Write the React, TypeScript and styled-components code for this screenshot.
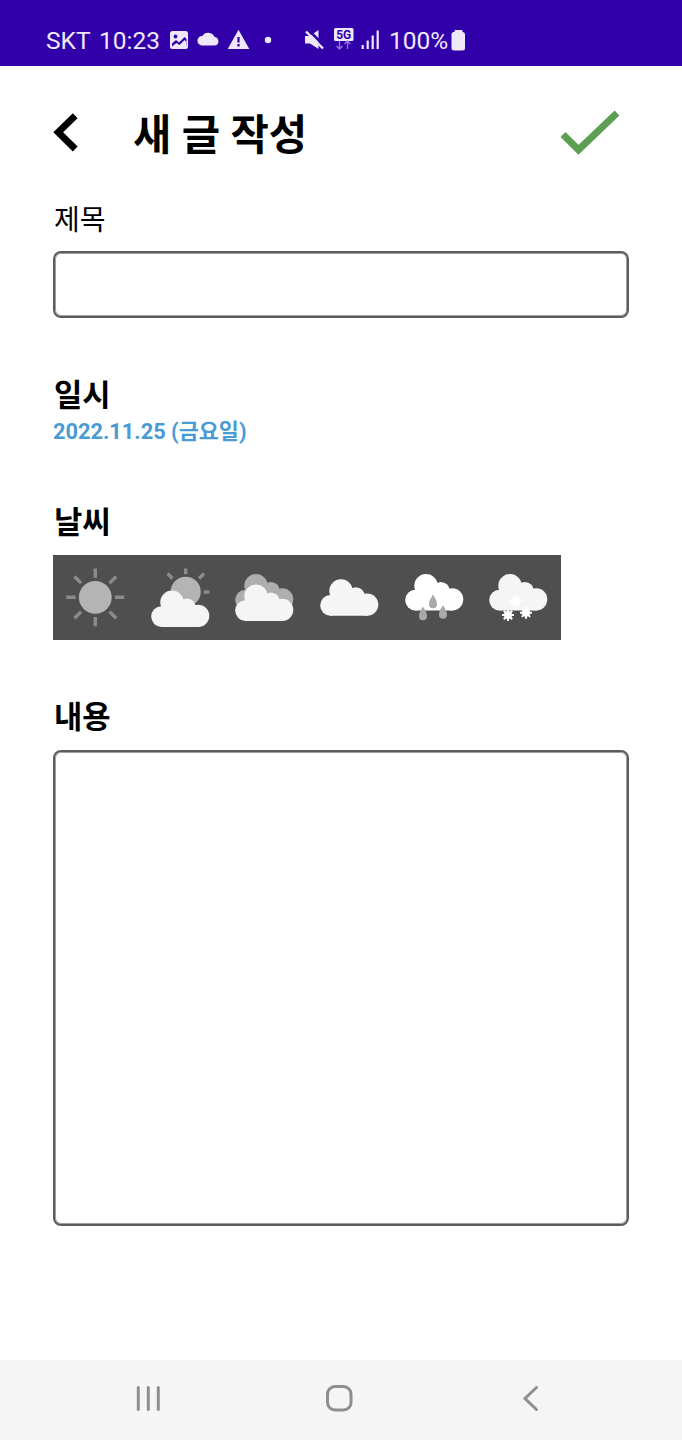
import React from 'react';
import styled, { createGlobalStyle } from 'styled-components';

const Global = createGlobalStyle`
  * { box-sizing: border-box; }
  body { margin: 0; background: #fff; }
  button { border: 0; padding: 0; background: none; display: block; }
  svg { display: block; }
`;

const Screen = styled.div`
  width: 682px;
  height: 1440px;
  display: flex;
  flex-direction: column;
  background: #fff;
  color: #000;
  font-family: Roboto, 'Noto Sans CJK KR', sans-serif;
`;

const StatusBar = styled.header`
  height: 66px;
  flex: none;
  display: flex;
  align-items: center;
  padding: 14px 0 0 46px;
  background: #3100a9;
  color: #efe8fb;
  font-size: 24.5px;
  line-height: 30px;
`;

const StatusText = styled.span<{ $width: number }>`
  width: ${p => p.$width}px;
  padding-top: 1px;
  white-space: nowrap;
`;

const Main = styled.main`
  flex: 1;
  padding: 0 53px;
`;

const TitleBar = styled.div`
  height: 134px;
  display: flex;
  align-items: center;
`;

const BackButton = styled.button`
  width: 80px;
`;

const Title = styled.h1`
  flex: 1;
  margin: 0;
  padding-top: 5px;
  font-size: 41.7px;
  font-weight: 700;
  line-height: 60px;
`;

const DoneButton = styled.button`
  margin-right: 9px;
`;

const Field = styled.section<{ $height: number }>`
  height: ${p => p.$height}px;
  display: flex;
  flex-direction: column;
  align-items: flex-start;
`;

const Label = styled.label<{ $bold?: boolean; $height: number }>`
  height: ${p => p.$height}px;
  padding: ${p => (p.$bold ? 2 : 1)}px 0 0 1px;
  line-height: 40px;
  font-size: ${p => (p.$bold ? 30.8 : 28)}px;
  font-weight: ${p => (p.$bold ? 700 : 400)};
`;

const TitleInput = styled.input`
  width: 100%;
  height: 67px;
  border: 2px solid #5c5c5c;
  box-shadow: inset 0 0 0 1px #a0a0a0;
  border-radius: 8px;
  padding: 0 16px;
  outline: none;
  font: inherit;
`;

const BodyInput = styled.textarea`
  display: block;
  width: 100%;
  height: 476px;
  border: 2px solid #5c5c5c;
  box-shadow: inset 0 0 0 1px #a0a0a0;
  border-radius: 8px;
  padding: 16px;
  outline: none;
  resize: none;
  font: inherit;
`;

const DateText = styled.time`
  padding-top: 1px;
  color: #4a9ad4;
  font-size: 21.8px;
  font-weight: 700;
  line-height: 30px;
`;

const WeatherRow = styled.div`
  display: grid;
  grid-template-columns: repeat(6, 1fr);
  width: 508px;
  height: 85px;
  background: #4f4f4f;
`;

const NavBar = styled.nav`
  height: 80px;
  flex: none;
  display: flex;
  justify-content: space-between;
  align-items: center;
  padding: 0 138px 4px 133px;
  background: #f5f5f5;
`;

const WeatherIcon = ({ children }: { children: React.ReactNode }) => (
  <svg width="84.67" height="85" viewBox="0 0 84.67 85">{children}</svg>
);

const Cloud = ({ dy, fill }: { dy: number; fill: string }) => (
  <g transform={`translate(0 ${dy})`} fill={fill}>
    <circle cx="34" cy="36" r="11.7" />
    <circle cx="48.8" cy="41.2" r="9" />
    <circle cx="23.5" cy="50.4" r="10.3" />
    <circle cx="60.2" cy="49.6" r="11.1" />
    <path d="M23 41h38v19.7H23z" />
  </g>
);

const Drop = ({ x, y }: { x: number; y: number }) => (
  <path
    transform={`translate(${x} ${y})`}
    d="M0 0C1.500 3 4 5.500 4 9.800a4 4 0 0 1-8 0C-4 5.500-1.500 3 0 0z"
    fill="#a9a9a9"
  />
);

const Flake = ({ x, y }: { x: number; y: number }) => (
  <g transform={`translate(${x} ${y})`} stroke="#fff" strokeWidth="2">
    <circle r="3" fill="#fff" />
    <path d="M0-6V6M-6 0H6M-4.200-4.200 4.200 4.200M4.200-4.200-4.200 4.200" />
  </g>
);

export default function App() {
  return (
    <>
      <Global />
      <Screen>
        <StatusBar>
          <StatusText $width={53}>SKT</StatusText>
          <StatusText $width={67}>10:23</StatusText>
          <svg width="223" height="30" viewBox="166 25 223 30" fill="#efe8fb">
            <rect x="170" y="31" width="18" height="18" rx="2.500" />
            <circle cx="175.500" cy="36.500" r="1.900" fill="#3100a9" />
            <path d="M172 43.500l4-3.500 3 2.500 5.500-5.500 2 2v7.500H172z" fill="#3100a9" />
            <path d="M172.500 46l4-3 3 2 5-5 2 2v5h-14z" />
            <path d="M202 45.500a4.700 4.700 0 0 1 .3-9.400 6.800 6.800 0 0 1 12.200.9 4.300 4.300 0 0 1 .5 8.500z" />
            <path d="M238.500 29.800l10.800 19.200h-21.600z" />
            <path d="M238.500 37v5.500M238.500 44v2.500" stroke="#3100a9" strokeWidth="2.200" />
            <circle cx="268" cy="40" r="3.200" />
            <path d="M305 36h5l8.500-6V49l-8.500-5.500h-5z" />
            <path d="M308 29.500L325 46.500" stroke="#3100a9" strokeWidth="2.500" />
            <path d="M306 31.500l17 17" stroke="#efe8fb" strokeWidth="2.400" />
            <rect x="334" y="28" width="19.500" height="13" rx="1.500" />
            <text x="343.700" y="38.800" textAnchor="middle" fontSize="12" fontWeight="700" fill="#3100a9">5G</text>
            <path d="M339.500 41v8m-3-3l3 3 3-3M347.500 49v-8m-3 3l3-3 3 3" fill="none" stroke="#9479dc" strokeWidth="1.300" />
            <path d="M362.700 45v4M367.700 40.500V49M372.700 35.500V49M377.700 30.500V49" stroke="#efe8fb" strokeWidth="2.200" />
          </svg>
          <StatusText $width={62}>100%</StatusText>
          <svg width="16" height="30" viewBox="451 25 16 30" fill="#efe8fb">
            <rect x="454.500" y="30" width="8" height="5" rx="1" />
            <rect x="451.500" y="32" width="13.500" height="18.500" rx="2.500" />
          </svg>
        </StatusBar>

        <Main>
          <TitleBar>
            <BackButton aria-label="뒤로">
              <svg width="26" height="42" viewBox="0 0 26 42" fill="none" stroke="#000" strokeWidth="6.800">
                <path d="M22.200 3.800L5.200 20.200l17 16.800" />
              </svg>
            </BackButton>
            <Title>새 글 작성</Title>
            <DoneButton aria-label="완료">
              <svg width="60" height="46" viewBox="0 0 60 46" fill="none" stroke="#5c9f53" strokeWidth="7">
                <path d="M3 24.500l15.500 15.300L57 3" />
              </svg>
            </DoneButton>
          </TitleBar>

          <Field $height={174}>
            <Label $height={51}>제목</Label>
            <TitleInput aria-label="제목" />
          </Field>

          <Field $height={127}>
            <Label as="div" $bold $height={42}>일시</Label>
            <DateText>2022.11.25 (금요일)</DateText>
          </Field>

          <Field $height={195}>
            <Label as="div" $bold $height={54}>날씨</Label>
            <WeatherRow>
              <WeatherIcon>
                <circle cx="42.300" cy="42.300" r="16.400" fill="#b4b4b4" />
                <path
                  d="M42.300 13.500v9.300M42.300 62v9.300M13.300 42.300h9.300M62 42.300h9.300M21.500 21.500l6.600 6.600M63.200 21.500l-6.600 6.600M21.500 63.200l6.600-6.600M63.200 63.200l-6.600-6.600"
                  stroke="#8b8b8b"
                  strokeWidth="3.400"
                />
              </WeatherIcon>
              <WeatherIcon>
                <circle cx="47.700" cy="36.700" r="15" fill="#b4b4b4" />
                <path
                  d="M47.700 13.500v5.700M65.700 37h5.700M29.500 18.500l5 5M66 18.500l-5 5"
                  stroke="#8b8b8b"
                  strokeWidth="3.400"
                />
                <Cloud dy={11.2} fill="#f5f5f5" />
              </WeatherIcon>
              <WeatherIcon>
                <Cloud dy={-5.3} fill="#aeaeae" />
                <Cloud dy={5.2} fill="#f5f5f5" />
              </WeatherIcon>
              <WeatherIcon>
                <Cloud dy={0} fill="#f5f5f5" />
              </WeatherIcon>
              <WeatherIcon>
                <Cloud dy={-5.3} fill="#fff" />
                <Drop x={31} y={51.5} />
                <Drop x={41} y={39.5} />
                <Drop x={51} y={50} />
              </WeatherIcon>
              <WeatherIcon>
                <Cloud dy={-5.3} fill="#f5f5f5" />
                <Flake x={39.5} y={46} />
                <Flake x={32} y={60} />
                <Flake x={50} y={57.7} />
              </WeatherIcon>
            </WeatherRow>
          </Field>

          <Field $height={530}>
            <Label $bold $height={54}>내용</Label>
            <BodyInput aria-label="내용" />
          </Field>
        </Main>

        <NavBar>
          <button aria-label="최근 앱">
            <svg width="30" height="30" viewBox="0 0 30 30" stroke="#8e8e8e" strokeWidth="3" strokeLinecap="round">
              <path d="M5.300 4.500v22M15.300 4.500v22M25.300 4.500v22" />
            </svg>
          </button>
          <button aria-label="홈">
            <svg width="30" height="30" viewBox="0 0 30 30" fill="none" stroke="#8e8e8e" strokeWidth="3">
              <rect x="3.500" y="3.500" width="23.500" height="23.500" rx="7.500" />
            </svg>
          </button>
          <button aria-label="뒤로 가기">
            <svg width="30" height="30" viewBox="0 0 30 30" fill="none" stroke="#8e8e8e" strokeWidth="3" strokeLinecap="round">
              <path d="M22.500 4.500L11 15.500l11.500 11" />
            </svg>
          </button>
        </NavBar>
      </Screen>
    </>
  );
}
